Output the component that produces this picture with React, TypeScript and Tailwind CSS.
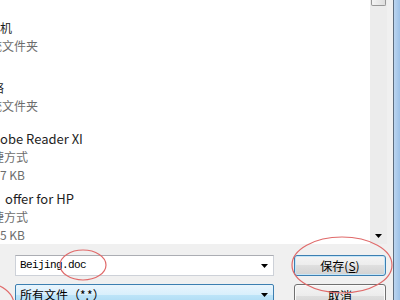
import React from "react";

type Line = { pre: string; text: string; box: string; size: string; tone: "main" | "sub" };

// Tiles view, scrolled so the icons and the start of each name sit off to the left
const tiles: Line[][] = [
  [
    { pre: "计算", text: "机", box: "w-[0px]", size: "text-[12px]", tone: "main" },
    { pre: "系统", text: "文件夹", box: "w-[2px]", size: "text-[12px]", tone: "sub" },
  ],
  [
    { pre: "网", text: "络", box: "-ml-[8px] w-0", size: "text-[12px]", tone: "main" },
    { pre: "系统", text: "文件夹", box: "w-[2px]", size: "text-[12px]", tone: "sub" },
  ],
  [
    { pre: "Ad", text: "obe Reader XI", box: "w-[0px]", size: "text-[13px]", tone: "main" },
    { pre: "快捷", text: "方式", box: "w-[4px]", size: "text-[12px]", tone: "sub" },
    { pre: "1.2", text: "7 KB", box: "w-[0px]", size: "text-[12px]", tone: "sub" },
  ],
  [
    { pre: "", text: "offer for HP", box: "w-[5px]", size: "text-[13px]", tone: "main" },
    { pre: "快捷", text: "方式", box: "w-[4px]", size: "text-[12px]", tone: "sub" },
    { pre: "2.2", text: "5 KB", box: "w-[0px]", size: "text-[12px]", tone: "sub" },
  ],
];

function Caret() {
  return (
    <svg width="7" height="4" viewBox="0 0 7 4" className="shrink-0">
      <polygon points="0,0 7,0 3.5,4" fill="#000" />
    </svg>
  );
}

function TileLine({ line }: { line: Line }) {
  return (
    <div
      className={`flex h-[18px] items-center whitespace-nowrap leading-[18px] ${line.size} ${
        line.tone === "main" ? "text-[#1e1e1e]" : "text-[#6d6d6d]"
      }`}
    >
      <span className={`flex shrink-0 justify-end ${line.box}`}>
        <span className="shrink-0">{line.pre}</span>
      </span>
      <span>{line.text}</span>
    </div>
  );
}

export default function App() {
  return (
    <div className="relative flex h-[300px] w-[400px] overflow-hidden bg-[#f0f0f0] font-['Noto_Sans_CJK_SC',sans-serif]">
      <div className="flex w-[393px] flex-col">
        {/* File list + scrollbar */}
        <div className="flex h-[244px]">
          <div className="w-[370px] overflow-hidden bg-white pt-[7px]">
            {tiles.map((lines, i) => (
              <div key={i} className="flex h-[60px] flex-col justify-center">
                {lines.map((l, j) => (
                  <TileLine key={j} line={l} />
                ))}
              </div>
            ))}
          </div>
          <div className="flex w-[17px] flex-col bg-[#ececec]">
            <div className="mx-[1px] h-[6px] rounded-b-[2px] border border-t-0 border-[#979797] bg-linear-to-r from-[#f4f4f4] to-[#dedede]" />
            <div className="flex-1" />
            <div className="flex h-[17px] items-center justify-center">
              <Caret />
            </div>
          </div>
          <div className="flex-1 bg-[#f0f0f0]" />
        </div>

        {/* Name / type rows */}
        <div className="flex flex-col gap-[8px] pl-[15px] pt-[11px]">
          <div className="flex gap-[20px]">
            <div className="flex h-[21px] w-[259px] items-center border border-[#cdd1d8] border-t-[#abadb3] bg-white pl-[4px] pr-[5px]">
              <span className="flex-1 font-['Liberation_Mono',monospace] text-[11px] font-medium tracking-[-0.6px] text-black">
                Beijing.doc
              </span>
              <Caret />
            </div>
            <button className="flex h-[21px] w-[92px] items-center justify-center rounded-[3px] border border-[#3c7fb1] bg-[linear-gradient(#f4f4f4,#ececec_50%,#dfdfdf_50%,#d2d2d2)] text-[12px] text-black shadow-[inset_0_0_0_1px_#c6e6f8]">
              保存(<span className="underline">S</span>)
            </button>
          </div>
          <div className="flex gap-[20px]">
            <div className="flex h-[22px] w-[259px] items-center rounded-[2px] border border-[#3c7fb1] bg-[linear-gradient(#e9f5fd,#d8effc_50%,#bde4f8_50%,#a9d9f4)] pl-[4px] pr-[5px]">
              <span className="flex-1 text-[12px] text-black">所有文件（*.*）</span>
              <Caret />
            </div>
            <button className="flex h-[23px] w-[92px] items-center justify-center rounded-[3px] border border-[#707070] bg-[linear-gradient(#f4f4f4,#ececec_50%,#dfdfdf_50%,#d2d2d2)] text-[12px] text-black shadow-[inset_0_0_0_1px_#fbfbfb]">
              取消
            </button>
          </div>
        </div>
      </div>

      {/* Window frame */}
      <div className="w-[7px] border-l border-[#5c6c7e] bg-linear-to-r from-[#bcd5ef] to-[#9dc1e7]" />

      {/* Red annotation marks drawn over the screenshot */}
      <svg className="pointer-events-none absolute inset-0" width="400" height="300">
        <ellipse cx="83" cy="265" rx="23" ry="15" fill="none" stroke="#e06a6a" strokeWidth="1.2" />
        <ellipse cx="342" cy="265" rx="50" ry="28" fill="none" stroke="#e06a6a" strokeWidth="1.2" />
        <ellipse cx="-15" cy="305" rx="29" ry="22" fill="none" stroke="#e06a6a" strokeWidth="1.2" />
      </svg>
    </div>
  );
}
